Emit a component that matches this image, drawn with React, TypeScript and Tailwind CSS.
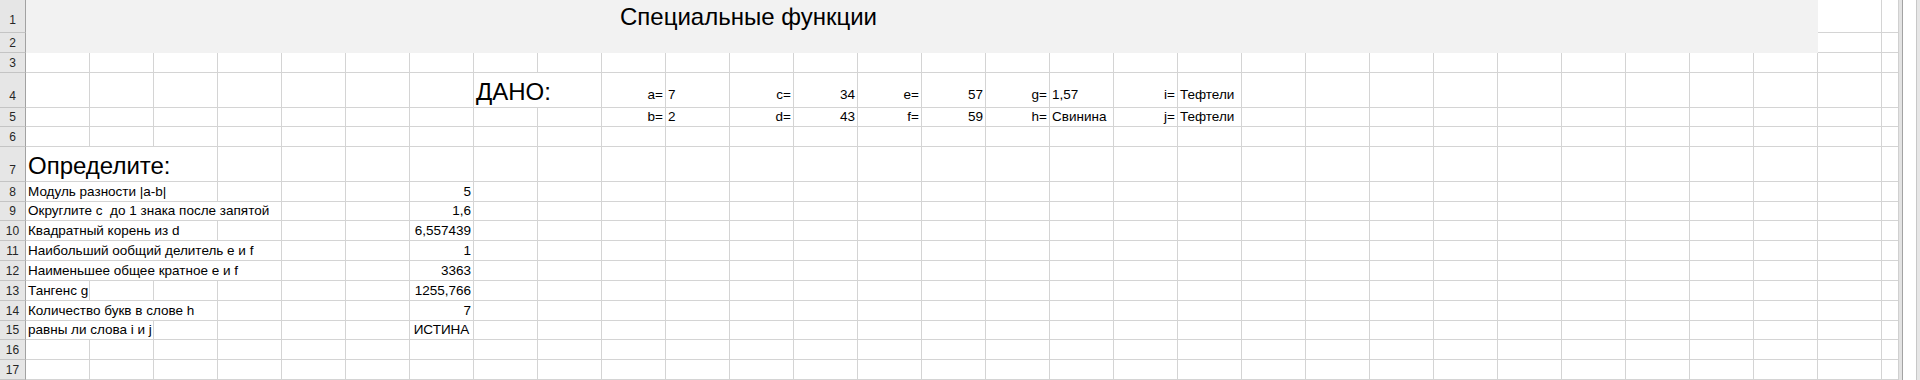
import React from "react"

type Cell = {
  col: number
  span?: number
  text: string
  align?: "left" | "right" | "center"
  big?: boolean
}

type Row = { n: number; tall?: boolean; cells?: Cell[] }

const COLS = 29

const spanWidth: Record<number, string> = {
  1: "w-[64px]",
  2: "w-[128px]",
  3: "w-[192px]",
  4: "w-[256px]",
}

const rows: Row[] = [
  { n: 3 },
  {
    n: 4,
    tall: true,
    cells: [
      { col: 7, span: 2, text: "ДАНО:", big: true },
      { col: 9, text: "a=", align: "right" },
      { col: 10, text: "7" },
      { col: 11, text: "c=", align: "right" },
      { col: 12, text: "34", align: "right" },
      { col: 13, text: "e=", align: "right" },
      { col: 14, text: "57", align: "right" },
      { col: 15, text: "g=", align: "right" },
      { col: 16, text: "1,57" },
      { col: 17, text: "i=", align: "right" },
      { col: 18, text: "Тефтели" },
    ],
  },
  {
    n: 5,
    cells: [
      { col: 9, text: "b=", align: "right" },
      { col: 10, text: "2" },
      { col: 11, text: "d=", align: "right" },
      { col: 12, text: "43", align: "right" },
      { col: 13, text: "f=", align: "right" },
      { col: 14, text: "59", align: "right" },
      { col: 15, text: "h=", align: "right" },
      { col: 16, text: "Свинина" },
      { col: 17, text: "j=", align: "right" },
      { col: 18, text: "Тефтели" },
    ],
  },
  { n: 6 },
  { n: 7, tall: true, cells: [{ col: 0, span: 3, text: "Определите:", big: true }] },
  {
    n: 8,
    cells: [
      { col: 0, span: 3, text: "Модуль разности |a-b|" },
      { col: 6, text: "5", align: "right" },
    ],
  },
  {
    n: 9,
    cells: [
      { col: 0, span: 4, text: "Округлите с  до 1 знака после запятой" },
      { col: 6, text: "1,6", align: "right" },
    ],
  },
  {
    n: 10,
    cells: [
      { col: 0, span: 3, text: "Квадратный корень из d" },
      { col: 6, text: "6,557439", align: "right" },
    ],
  },
  {
    n: 11,
    cells: [
      { col: 0, span: 4, text: "Наибольший ообщий делитель e и f" },
      { col: 6, text: "1", align: "right" },
    ],
  },
  {
    n: 12,
    cells: [
      { col: 0, span: 4, text: "Наименьшее общее кратное e и f" },
      { col: 6, text: "3363", align: "right" },
    ],
  },
  {
    n: 13,
    cells: [
      { col: 0, span: 1, text: "Тангенс g" },
      { col: 6, text: "1255,766", align: "right" },
    ],
  },
  {
    n: 14,
    cells: [
      { col: 0, span: 3, text: "Количество букв в слове h" },
      { col: 6, text: "7", align: "right" },
    ],
  },
  {
    n: 15,
    cells: [
      { col: 0, span: 2, text: "равны ли слова i и j" },
      { col: 6, text: "ИСТИНА", align: "center" },
    ],
  },
  { n: 16 },
  { n: 17 },
]

function RowHeader({ n, h, pb }: { n: number; h: string; pb: string }) {
  return (
    <div
      className={`${h} ${pb} w-[26px] shrink-0 flex items-end justify-center bg-[#e6e6e6] border-b border-r border-b-[#c4c4c4] border-r-[#a2a2a2] text-[12px] leading-[16px] text-[#262626]`}
    >
      {n}
    </div>
  )
}

function SheetRow({ row }: { row: Row }) {
  const tall = !!row.tall
  const out: React.ReactNode[] = []
  let c = 0
  while (c < COLS) {
    const cell = row.cells?.find((x) => x.col === c)
    if (cell) {
      const span = cell.span ?? 1
      const justify =
        cell.align === "right" ? "justify-end" : cell.align === "center" ? "justify-center" : "justify-start"
      const font = cell.big
        ? "text-[24px] leading-[28px] pb-[1px]"
        : tall
        ? "text-[13.5px] leading-[16px] pb-[4px]"
        : "text-[13.5px] leading-[16px] pb-[1px]"
      out.push(
        <div
          key={c}
          className={`${spanWidth[span]} shrink-0 h-full flex items-end ${justify} ${font} px-[2px] border-r border-b border-[#d4d4d4] whitespace-pre text-black`}
        >
          {cell.text}
        </div>
      )
      c += span
    } else {
      out.push(<div key={c} className="w-[64px] shrink-0 h-full border-r border-b border-[#d4d4d4]" />)
      c += 1
    }
  }
  return (
    <div className={`flex ${tall ? "h-[35px]" : "h-[20px]"}`}>
      <RowHeader n={row.n} h="h-full" pb={tall ? "pb-[3px]" : "pb-[1px]"} />
      {out}
      <div className="w-[16px] shrink-0 h-full border-b border-[#d4d4d4]" />
    </div>
  )
}

export default function App() {
  return (
    <div className="h-[380px] w-[1920px] overflow-hidden bg-white flex font-['Liberation_Sans',Arial,sans-serif]">
      <div className="w-[1898px] shrink-0 flex flex-col">
        {/* title rows 1-2 */}
        <div className="flex h-[53px]">
          <div className="flex flex-col">
            <RowHeader n={1} h="h-[33px]" pb="pb-[4px]" />
            <RowHeader n={2} h="h-[20px]" pb="pb-[1px]" />
          </div>
          <div className="w-[1792px] shrink-0 h-full bg-[#f2f2f2]">
            <div className="w-[1445px] h-[33px] flex items-end justify-center pb-[2px] text-[24px] leading-[28px] text-black">
              Специальные функции
            </div>
          </div>
          <div className="flex flex-col">
            <div className="flex h-[33px]">
              <div className="w-[64px] h-full border-r border-b border-[#d4d4d4]" />
              <div className="w-[16px] h-full border-b border-[#d4d4d4]" />
            </div>
            <div className="flex h-[20px]">
              <div className="w-[64px] h-full border-r border-b border-[#d4d4d4]" />
              <div className="w-[16px] h-full border-b border-[#d4d4d4]" />
            </div>
          </div>
        </div>
        {rows.map((r) => (
          <SheetRow key={r.n} row={r} />
        ))}
      </div>
      {/* window edge */}
      <div className="flex h-full">
        <div className="w-[1px] bg-[#d0d0d0]" />
        <div className="w-[3px] bg-[#e3e3e3]" />
        <div className="w-[1px] bg-[#a3a3a3]" />
        <div className="w-[13px] bg-white" />
        <div className="w-[1px] bg-[#c8c8c8]" />
        <div className="w-[3px] bg-[#e6e6e6]" />
      </div>
    </div>
  )
}
